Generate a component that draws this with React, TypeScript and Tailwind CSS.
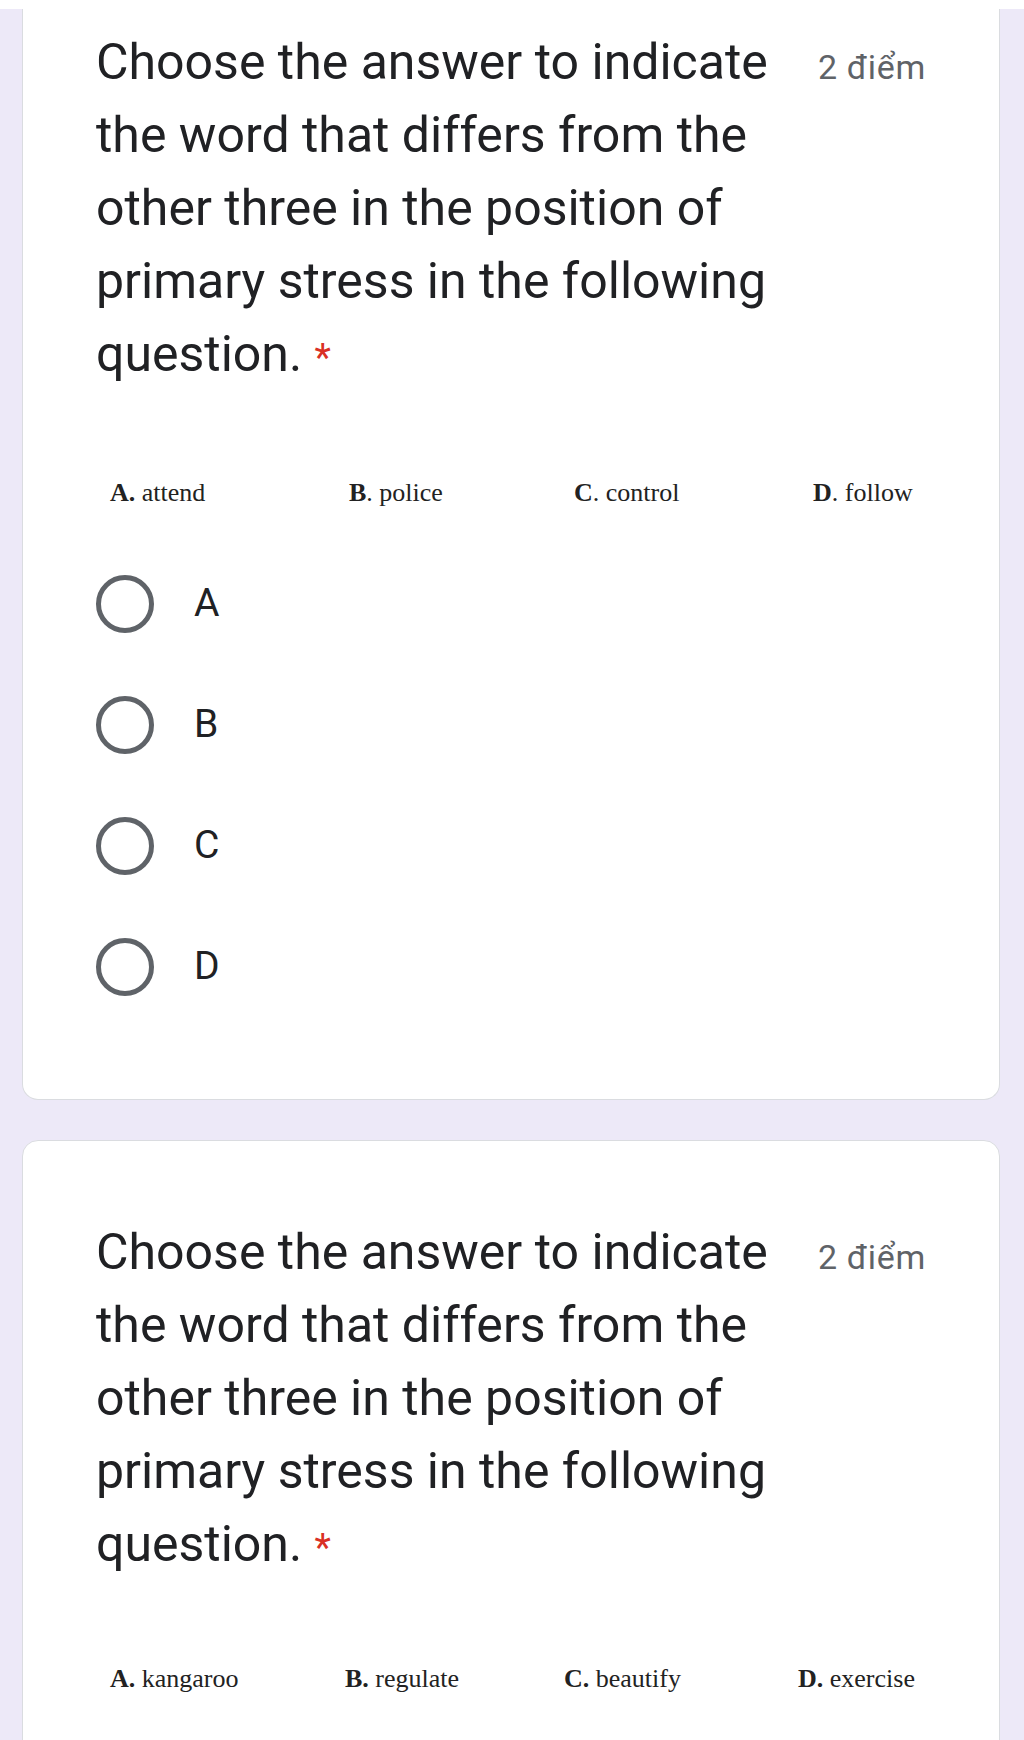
import React from "react";

type Choice = { key: string; word: string; boldDot: boolean };

const first: Choice[] = [
  { key: "A", word: "attend", boldDot: true },
  { key: "B", word: "police", boldDot: false },
  { key: "C", word: "control", boldDot: false },
  { key: "D", word: "follow", boldDot: false },
];

const second: Choice[] = [
  { key: "A", word: "kangaroo", boldDot: true },
  { key: "B", word: "regulate", boldDot: true },
  { key: "C", word: "beautify", boldDot: true },
  { key: "D", word: "exercise", boldDot: true },
];

const title =
  "Choose the answer to indicate the word that differs from the other three in the position of primary stress in the following question.";

function Heading() {
  return (
    <div className="flex items-baseline">
      <h2 className="w-[700px] text-[50px] leading-[73px] text-[#202124] font-normal">
        {title}{" "}
        <span className="text-[38px] leading-none align-baseline text-[#d93025]">*</span>
      </h2>
      <span className="ml-auto text-[34px] tracking-[0.02em] text-[#5f6368]">2 điểm</span>
    </div>
  );
}

// the scanned word list from the worksheet
function WordRow({ items, cols, top }: { items: Choice[]; cols: string; top: string }) {
  return (
    <div
      className={`h-[40px] pl-[14px] grid items-center text-[26px] text-[#222] ${top} ${cols}`}
      style={{ fontFamily: '"Liberation Serif", "Times New Roman", serif' }}
    >
      {items.map((c) => (
        <div key={c.key} className="whitespace-nowrap">
          <span className="font-bold">
            {c.key}
            {c.boldDot ? "." : ""}
          </span>
          {c.boldDot ? "" : "."} {c.word}
        </div>
      ))}
    </div>
  );
}

function Radio({ label }: { label: string }) {
  return (
    <label className="h-[121px] flex items-center gap-[40px] cursor-pointer">
      <span className="w-[58px] h-[58px] rounded-full border-[5px] border-[#5f6368] shrink-0" />
      <span className="text-[39px] text-[#202124]">{label}</span>
    </label>
  );
}

export default function App() {
  return (
    <div
      className="w-[1024px] h-[1740px] overflow-hidden bg-[#ede9f8]"
      style={{ fontFamily: 'Roboto, "Liberation Sans", sans-serif' }}
    >
      <div className="h-[9px] bg-white" />

      {/* question 1, top is scrolled off */}
      <div className="ml-[22px] w-[978px] bg-white border-x border-b border-[#dadce0] rounded-b-[16px] px-[73px] pt-[17px] pb-[72px]">
        <Heading />
        <WordRow items={first} cols="grid-cols-[239px_225px_239px_auto]" top="mt-[81px]" />
        <div className="mt-[31px] flex flex-col">
          {["A", "B", "C", "D"].map((l) => (
            <Radio key={l} label={l} />
          ))}
        </div>
      </div>

      {/* question 2, options below the fold */}
      <div className="mt-[40px] ml-[22px] w-[978px] bg-white border border-[#dadce0] rounded-[16px] px-[73px] pt-[75px] pb-[200px]">
        <Heading />
        <WordRow items={second} cols="grid-cols-[235px_219px_234px_auto]" top="mt-[77px]" />
      </div>
    </div>
  );
}
